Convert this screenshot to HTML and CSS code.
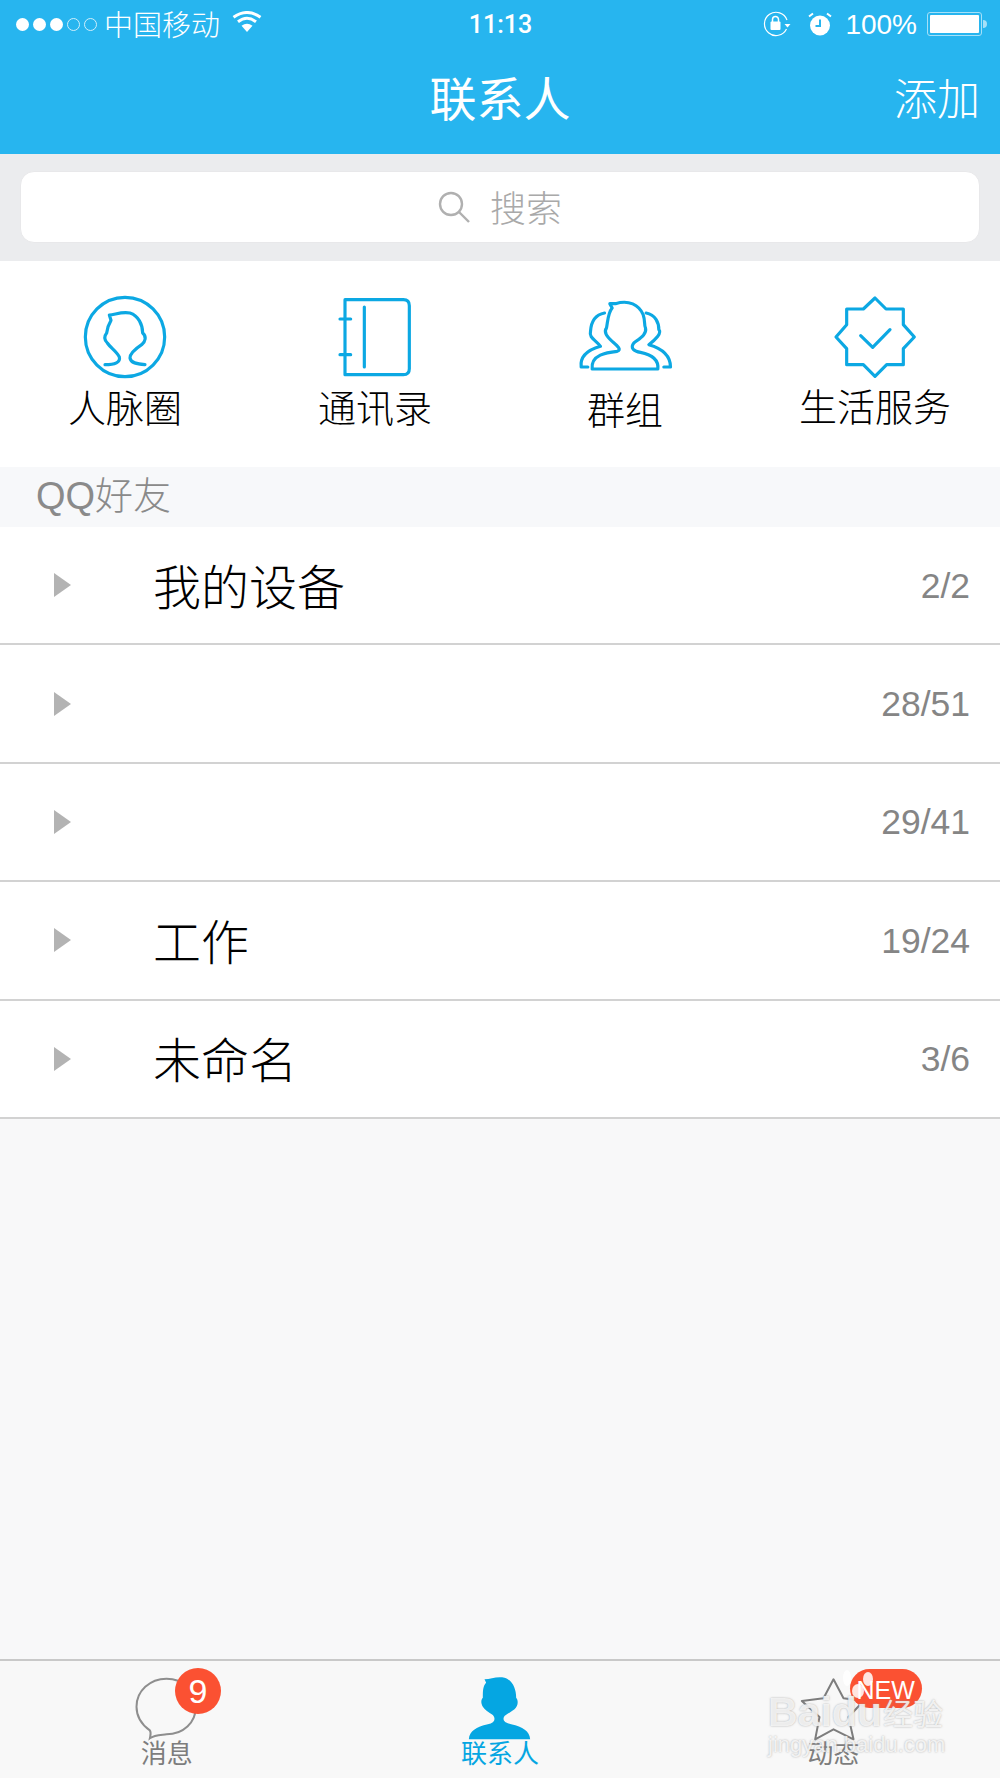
FILE: index.html
```html
<!DOCTYPE html>
<html lang="zh-CN">
<head>
    <meta charset="UTF-8">
    <meta name="viewport" content="width=device-width, initial-scale=1.0">
    <title>联系人</title>
    <link rel="stylesheet" href="styles.css">
</head>
<body>
    <header class="top">
        <div class="status">
            <div class="status-left">
                <span class="dot"></span><span class="dot"></span><span class="dot"></span>
                <span class="dot dot-off"></span><span class="dot dot-off"></span>
                <span class="carrier">中国移动</span>
                <svg class="wifi" viewBox="0 0 30 21">
                    <path d="M15 21 L9.5 14.8 Q15 10.5 20.5 14.8 Z" fill="#fff"/>
                    <path d="M6 10.8 Q15 3.8 24 10.8" fill="none" stroke="#fff" stroke-width="3"/>
                    <path d="M1.5 6.2 Q15 -3.2 28.5 6.2" fill="none" stroke="#fff" stroke-width="3"/>
                </svg>
            </div>
            <div class="time">11:13</div>
            <div class="status-right">
                <svg class="rotlock" viewBox="0 0 28 26">
                    <path d="M24 9 A11.6 11.6 0 1 0 23.5 18" fill="none" stroke="#fff" stroke-width="1.2"/>
                    <path d="M21.5 13 H27.5 L24.5 16.5 Z" fill="#fff"/>
                    <rect x="7.5" y="10.5" width="10" height="8.5" rx="1" fill="#fff"/>
                    <path d="M9.5 11 V8.5 A3 3 0 0 1 15.5 8.5 V11" fill="none" stroke="#fff" stroke-width="1.5"/>
                </svg>
                <svg class="alarm" viewBox="0 0 24 24">
                    <circle cx="12" cy="13.5" r="10" fill="#fff"/>
                    <path d="M12 7.5 V14 H7.5" fill="none" stroke="#27b5ef" stroke-width="2"/>
                    <path d="M1 4.5 L5 1.5 M23 4.5 L19 1.5" stroke="#fff" stroke-width="2"/>
                </svg>
                <span class="percent">100%</span>
                <div class="battery"><div class="battery-fill"></div></div>
                <div class="battery-nub"></div>
            </div>
        </div>
        <div class="nav">
            <div></div>
            <div class="nav-title">联系人</div>
            <div class="nav-action">添加</div>
        </div>
    </header>

    <div class="search-wrap">
        <div class="search">
            <svg class="search-icon" viewBox="0 0 32 32">
                <circle cx="13" cy="13" r="11" fill="none" stroke="#b0b0b0" stroke-width="2.4"/>
                <path d="M21 21 L31 31" stroke="#b0b0b0" stroke-width="2.4"/>
            </svg>
            <span>搜索</span>
        </div>
    </div>

    <div class="shortcuts">
        <div class="shortcut">
            <svg class="shortcut-icon" viewBox="249 46 252 252">
                <circle cx="375" cy="172" r="119"/>
                <path d="M315 255 C345 255 362 248 358 232 C350 215 332 205 322 190 C312 180 312 170 320 160 C322 145 325 135 333 122 L328 106 C345 105 365 95 390 100 C415 108 428 135 428 160 C440 170 437 185 425 195 C410 205 390 222 390 235 C392 250 410 253 435 255"/>
            </svg>
            <div class="shortcut-label">人脉圈</div>
        </div>
        <div class="shortcut">
            <svg class="shortcut-icon" viewBox="999 46 252 252">
                <path d="M1035 60 H1210 Q1228 60 1228 78 V267 Q1228 285 1210 285 H1035 Z"/>
                <path d="M1093 82 V262 M1020 118 H1052 M1020 225 H1052"/>
            </svg>
            <div class="shortcut-label">通讯录</div>
        </div>
        <div class="shortcut">
            <svg class="shortcut-icon shortcut-icon-wide" viewBox="230 46 290 252">
                <path d="M275 268 H472 C475 240 455 225 420 218 C400 215 388 205 400 190 C415 178 440 165 435 145 C430 135 435 125 428 105 C415 75 385 60 345 72 L328 72 L335 85 C322 100 322 125 318 145 C310 155 318 170 335 185 C350 198 365 210 350 215 C320 218 270 225 275 268 Z"/>
                <path d="M262 262 H242 C238 230 265 210 300 200 C285 180 265 175 270 155 C272 125 285 105 312 100"/>
                <path d="M437 100 C465 105 475 130 475 150 C485 160 465 180 445 195 C480 205 510 225 510 262 H490"/>
            </svg>
            <div class="shortcut-label shortcut-label-low">群组</div>
        </div>
        <div class="shortcut">
            <svg class="shortcut-icon" viewBox="999 46 252 252">
                <path d="M1125 55 L1158 88 H1210 V135 L1243 172 L1210 207 V255 H1160 L1125 290 L1090 255 H1040 V207 L1008 172 L1040 135 V88 H1090 Z"/>
                <path d="M1082 168 L1118 203 L1170 150"/>
            </svg>
            <div class="shortcut-label shortcut-label-high">生活服务</div>
        </div>
    </div>

    <div class="section-title">QQ好友</div>

    <main class="groups">
        <div class="group"><span class="arrow"></span><span class="group-name">我的设备</span><span class="group-count">2/2</span></div>
        <div class="group"><span class="arrow"></span><span class="group-name"></span><span class="group-count">28/51</span></div>
        <div class="group"><span class="arrow"></span><span class="group-name"></span><span class="group-count">29/41</span></div>
        <div class="group"><span class="arrow"></span><span class="group-name">工作</span><span class="group-count">19/24</span></div>
        <div class="group"><span class="arrow"></span><span class="group-name">未命名</span><span class="group-count">3/6</span></div>
    </main>

    <nav class="tabbar">
        <div class="tab">
            <svg class="tab-icon" viewBox="100 105 200 195">
                <path d="M150 292 C152 282 155 275 150 268 C125 250 110 225 110 197 C110 150 150 113 200 113 C250 113 288 150 288 197 C288 245 250 280 200 280 C185 282 165 280 150 292 Z" fill="none" stroke="#8e8e8e" stroke-width="6"/>
            </svg>
            <div class="tab-label">消息</div>
            <div class="badge badge-num">9</div>
        </div>
        <div class="tab tab-active">
            <svg class="tab-icon" viewBox="1100 105 200 195">
                <path d="M1108 295 C1110 270 1130 258 1165 250 C1185 245 1190 235 1180 222 C1165 212 1155 205 1150 197 C1143 185 1145 175 1150 170 C1150 150 1150 135 1160 125 L1155 115 C1175 115 1190 105 1215 110 C1240 118 1250 145 1250 170 C1258 180 1255 195 1245 205 C1235 212 1225 218 1215 225 C1207 238 1215 245 1235 250 C1270 258 1290 270 1292 295 Z" fill="#05a6e2"/>
            </svg>
            <div class="tab-label">联系人</div>
        </div>
        <div class="tab">
            <svg class="tab-icon" viewBox="300 105 200 195">
                <path d="M400 115 L430 172 L490 180 L445 228 L460 295 L400 265 L345 295 L358 228 L305 180 L370 172 Z" fill="none" stroke="#7d7d7d" stroke-width="6" stroke-linejoin="round"/>
            </svg>
            <div class="tab-label">动态</div>
            <div class="badge badge-new">NEW</div>
        </div>
        <div class="watermark">
            <svg class="paw" viewBox="0 0 36 30">
                <ellipse cx="5" cy="9" rx="4" ry="8"/>
                <ellipse cx="16" cy="22" rx="6" ry="7"/>
                <ellipse cx="26" cy="10" rx="5" ry="7"/>
            </svg>
            <div class="wm-top"><span class="wm-baidu">Baidu</span><span class="wm-jy">经验</span></div>
            <div class="wm-url">jingyan.baidu.com</div>
        </div>
    </nav>
</body>
</html>
```

FILE: styles.css
```css
* {
    box-sizing: border-box;
}
body {
    margin: 0;
    width: 1000px;
    height: 1778px;
    display: flex;
    flex-direction: column;
    overflow: hidden;
    background-color: #f8f8f9;
    font-family: "Liberation Sans", "Noto Sans CJK SC", sans-serif;
}

/* top bar */
.top {
    height: 154px;
    background-color: #27b5ef;
    color: #fff;
}
.status {
    height: 45px;
    display: grid;
    grid-template-columns: 1fr auto 1fr;
    align-items: center;
    padding: 3px 13px 0 16px;
}
.status-left {
    display: flex;
    align-items: center;
    gap: 4px;
}
.dot {
    width: 13px;
    height: 13px;
    border-radius: 50%;
    background-color: #fff;
}
.dot-off {
    background: none;
    border: 1px solid #cfeefb;
}
.carrier {
    margin-left: 3px;
    margin-top: -2px;
    font-size: 29px;
    font-weight: 300;
}
.wifi {
    width: 30px;
    height: 21px;
    margin: -6px 0 0 8px;
}
.time {
    margin: 1px 2px 0 0;
    font-family: Roboto, "Liberation Sans", sans-serif;
    font-size: 25px;
    font-weight: 500;
}
.status-right {
    display: flex;
    align-items: center;
    justify-content: flex-end;
}
.rotlock {
    width: 28px;
    height: 26px;
    margin-right: 17px;
}
.alarm {
    width: 24px;
    height: 24px;
    margin-right: 13px;
}
.percent {
    margin-top: 2px;
    margin-right: 10px;
    font-size: 28px;
}
.battery {
    width: 55px;
    height: 24px;
    padding: 2px;
    border: 1px solid #a5e0f8;
    border-radius: 3px;
}
.battery-fill {
    height: 100%;
    background-color: #fff;
    border-radius: 1px;
}
.battery-nub {
    width: 4px;
    height: 8px;
    margin-left: 1px;
    background-color: #a5e0f8;
    border-radius: 0 4px 4px 0;
}
.nav {
    height: 109px;
    display: grid;
    grid-template-columns: 1fr auto 1fr;
    align-items: center;
    padding: 0 20px 8px;
}
.nav-title {
    font-size: 47px;
}
.nav-action {
    text-align: right;
    font-size: 43px;
    font-weight: 300;
}

/* search */
.search-wrap {
    height: 107px;
    padding: 17px 20px 18px;
    background-color: #ebecee;
}
.search {
    height: 72px;
    display: flex;
    align-items: center;
    justify-content: center;
    gap: 20px;
    background-color: #fff;
    border: 1px solid #e8e8ea;
    border-radius: 14px;
    color: #a9a9a9;
    font-size: 36px;
    font-weight: 300;
}
.search-icon {
    width: 32px;
    height: 32px;
}
.search span {
    margin-top: -2px;
}

/* four shortcuts */
.shortcuts {
    height: 206px;
    display: grid;
    grid-template-columns: repeat(4, 1fr);
    padding-top: 34px;
    background-color: #fff;
}
.shortcut {
    display: flex;
    flex-direction: column;
    align-items: center;
}
.shortcut-icon {
    width: 84px;
    height: 84px;
    fill: none;
    stroke: #0ca8e3;
    stroke-width: 9.5;
    stroke-linejoin: round;
    stroke-linecap: round;
}
.shortcut-icon-wide {
    width: 97px;
}
.shortcut-label {
    margin-top: 6px;
    font-size: 38px;
    font-weight: 300;
    line-height: 48px;
    color: #000;
}
.shortcut-label-low {
    margin-top: 8px;
}
.shortcut-label-high {
    margin-top: 5px;
}

.section-title {
    height: 60px;
    padding-left: 36px;
    font-size: 38px;
    font-weight: 300;
    line-height: 58px;
    color: #8a8a8a;
    background-color: #f7f8fa;
}

/* friend groups */
.groups {
    flex: 1;
}
.group {
    height: 118.4px;
    display: flex;
    align-items: center;
    padding: 0 30px 0 54px;
    background-color: #fff;
    border-bottom: 2px solid #d2d2d2;
}
.arrow {
    width: 0;
    height: 0;
    border-style: solid;
    border-width: 12px 0 12px 17px;
    border-color: transparent transparent transparent #b3b3b3;
}
.group-name {
    flex: 1;
    margin-left: 82px;
    margin-top: -3px;
    font-size: 48px;
    font-weight: 300;
    color: #000;
}
.group-count {
    margin-top: 2px;
    font-size: 35.5px;
    color: #858585;
}

/* bottom tabs */
.tabbar {
    position: relative;
    height: 119px;
    display: grid;
    grid-template-columns: repeat(3, 1fr);
    background-color: #f8f8f8;
    border-top: 2px solid #c9c9c9;
}
.tab {
    position: relative;
    display: flex;
    flex-direction: column;
    align-items: center;
    padding-top: 15px;
}
.tab-icon {
    width: 67px;
    height: 65px;
    margin-bottom: -3px;
}
.tab-label {
    font-size: 26px;
    line-height: 32px;
    color: #7d7d7d;
}
.tab-active .tab-label {
    color: #05a6e2;
}
.badge {
    position: absolute;
    background-color: #fb5132;
    color: #fff;
    text-align: center;
}
.badge-num {
    top: 7px;
    left: 175px;
    width: 46px;
    height: 46px;
    border-radius: 50%;
    font-size: 34px;
    line-height: 46px;
}
.badge-new {
    top: 8px;
    left: 183px;
    width: 72px;
    height: 39px;
    border-radius: 20px;
    font-size: 25px;
    line-height: 42px;
}

/* photo watermark */
.watermark {
    position: absolute;
    left: 768px;
    top: 33px;
    width: 180px;
    color: rgba(255, 255, 255, 0.8);
    text-shadow: 0 0 2px rgba(150, 150, 150, 0.8);
}
.wm-top {
    display: flex;
    align-items: center;
    height: 36px;
}
.wm-baidu {
    width: 115px;
    font-size: 41px;
    font-weight: 700;
}
.wm-jy {
    font-size: 30px;
}
.wm-url {
    margin-top: 2px;
    font-size: 22px;
    line-height: 26px;
}
.paw {
    position: absolute;
    left: 74px;
    top: -25px;
    width: 36px;
    height: 30px;
    fill: rgba(255, 255, 255, 0.85);
}
```
